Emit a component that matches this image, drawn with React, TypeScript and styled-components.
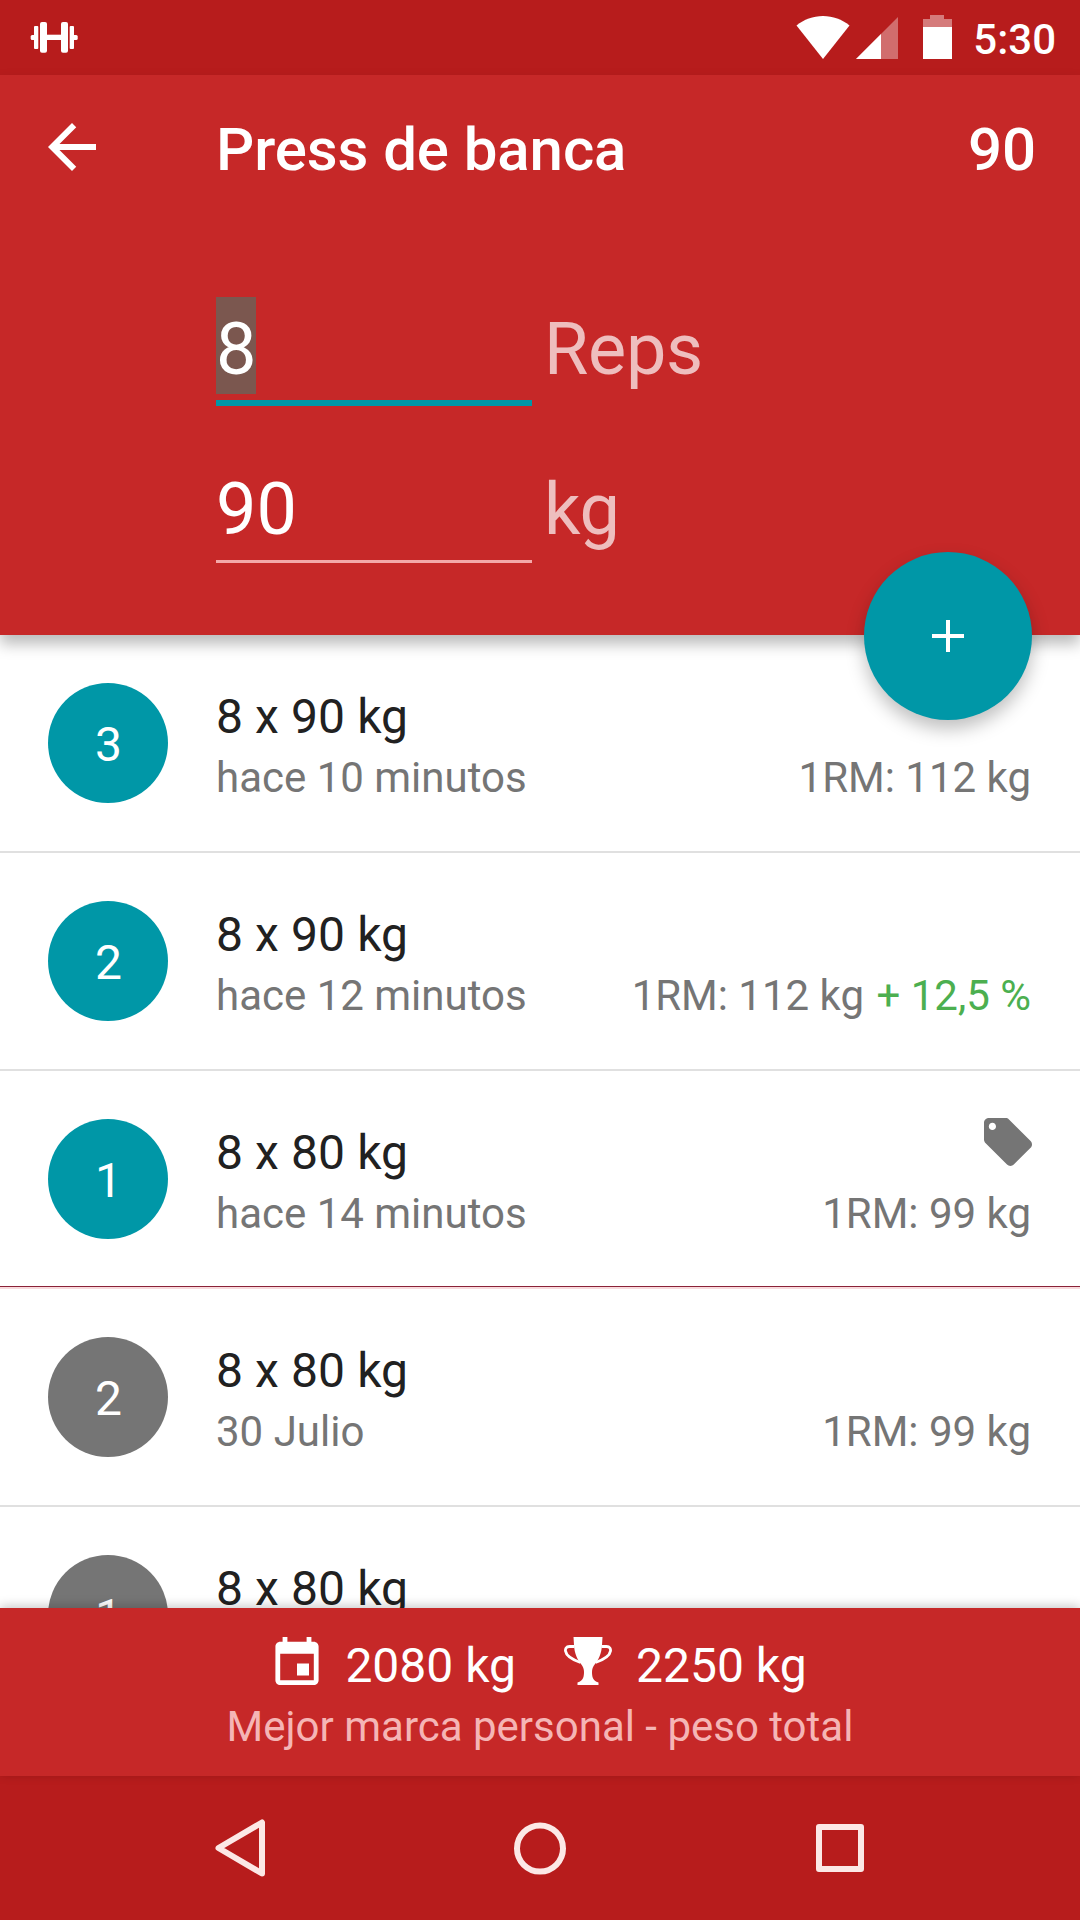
import React from "react";
import styled, { createGlobalStyle } from "styled-components";

const colors = {
  primary: "#c62828",
  primaryDark: "#b71c1c",
  accent: "#0097a7",
  text: "#212121",
  secondary: "#757575",
  divider: "#e0e0e0",
  gain: "#4caf50",
};

const GlobalStyle = createGlobalStyle`
  * { box-sizing: border-box; }
  body { margin: 0; }
`;

const Screen = styled.div`
  width: 1080px;
  height: 1920px;
  display: flex;
  flex-direction: column;
  overflow: hidden;
  background: #fff;
  font-family: Roboto, sans-serif;
  font-size: 48px;
  color: ${colors.text};
`;

const StatusBar = styled.div`
  flex: none;
  height: 75px;
  display: flex;
  justify-content: space-between;
  padding: 0 24px 0 30px;
  background: ${colors.primaryDark};
  color: #fff;
`;

const StatusIcons = styled.div`
  display: flex;
`;

const StatusIcon = styled.svg<{ $gap?: number }>`
  display: block;
  height: 75px;
  margin-right: ${(p) => p.$gap ?? 0}px;
`;

const Clock = styled.div`
  font-size: 42px;
  font-weight: 500;
  line-height: 80px;
`;

const Header = styled.header`
  flex: none;
  position: relative;
  z-index: 2;
  height: 560px;
  background: ${colors.primary};
  color: #fff;
  box-shadow: 0 9px 14px rgba(0, 0, 0, 0.27);
`;

const Toolbar = styled.div`
  height: 147px;
  display: flex;
  align-items: center;
  padding: 0 44px 0 48px;
`;

const BackArrow = styled.svg`
  display: block;
  width: 48px;
  height: 48px;
  margin: 0 120px 3px 0;
`;

const Title = styled.h1<{ $end?: boolean }>`
  margin: ${(p) => (p.$end ? "0 0 0 auto" : "0")};
  font-size: 60px;
  font-weight: 500;
  line-height: 70px;
  letter-spacing: -0.1px;
  padding-top: 3px;
`;

const Form = styled.div`
  padding: 75px 0 0 216px;
  display: flex;
  flex-direction: column;
  gap: 51px;
`;

const Field = styled.label`
  display: flex;
  gap: 12px;
  height: 109px;
  font-size: 72px;
  line-height: 97px;
`;

const Input = styled.div<{ $focused?: boolean }>`
  width: 316px;
  height: ${(p) => (p.$focused ? 109 : 106)}px;
  border-bottom: ${(p) => (p.$focused ? `6px solid ${colors.accent}` : "3px solid #f4a9a9")};
`;

const Value = styled.span<{ $selected?: boolean }>`
  display: inline-block;
  height: 97px;
  line-height: 105px;
  background: ${(p) => (p.$selected ? "#7b574f" : "transparent")};
`;

const Unit = styled.span`
  line-height: 105px;
  letter-spacing: -0.3px;
  color: #eebebe;
`;

const Fab = styled.button`
  position: absolute;
  right: 48px;
  bottom: -85px;
  width: 168px;
  height: 168px;
  padding: 0;
  border: 0;
  border-radius: 50%;
  display: grid;
  place-items: center;
  background: ${colors.accent};
  box-shadow: 0 9px 18px rgba(0, 0, 0, 0.25);
`;

const List = styled.main`
  flex: 1;
  min-height: 0;
  overflow: hidden;
`;

const Row = styled.div<{ $strong?: boolean }>`
  height: 218px;
  display: flex;
  padding: 48px 48px 0;
  border-bottom: 2px solid ${(p) => (p.$strong ? "#f8dadd" : colors.divider)};
  box-shadow: ${(p) => (p.$strong ? "inset 0 -1px 0 #8a2238" : "none")};
`;

const Badge = styled.div<{ $past?: boolean }>`
  flex: none;
  width: 120px;
  height: 120px;
  margin-right: 48px;
  padding-left: 1px;
  border-radius: 50%;
  text-align: center;
  line-height: 124px;
  background: ${(p) => (p.$past ? colors.secondary : colors.accent)};
  color: #fff;
`;

const Details = styled.div`
  flex: 1;
  display: flex;
  flex-direction: column;
`;

const Line = styled.div<{ $small?: boolean }>`
  display: flex;
  justify-content: space-between;
  height: ${(p) => (p.$small ? 56 : 64)}px;
  padding-right: ${(p) => (p.$small ? 1 : 0)}px;
  line-height: ${(p) => (p.$small ? 62 : 68)}px;
  font-size: ${(p) => (p.$small ? 42 : 48)}px;
  letter-spacing: ${(p) => (p.$small ? 0 : 0.1)}px;
  color: ${(p) => (p.$small ? colors.secondary : colors.text)};
`;

const Gain = styled.span`
  margin-left: 2px;
  color: ${colors.gain};
`;

const TagIcon = styled.svg`
  display: block;
  width: 48px;
  height: 48px;
  margin-top: -1px;
`;

const Footer = styled.footer`
  flex: none;
  position: relative;
  z-index: 2;
  height: 168px;
  padding-top: 24px;
  background: ${colors.primary};
  color: #fff;
  box-shadow: 0 -2px 10px rgba(0, 0, 0, 0.22);
`;

const Totals = styled.div`
  display: flex;
  justify-content: center;
  height: 66px;
  line-height: 68px;
`;

const TotalIcon = styled.svg`
  display: block;
  width: 48px;
  height: 48px;
  margin: 5px 24px 0 0;
`;

const Total = styled.div`
  display: flex;
  & + & {
    margin-left: 48px;
  }
`;

const Caption = styled.div`
  text-align: center;
  font-size: 42px;
  line-height: 58px;
  color: #f5b5b5;
`;

const NavBar = styled.nav`
  flex: none;
  height: 144px;
  display: flex;
  justify-content: center;
  background: ${colors.primaryDark};
`;

const NavButton = styled.svg`
  display: block;
  width: 300px;
  height: 144px;
  fill: none;
  stroke: #fce8e6;
  stroke-width: 6;
  stroke-linejoin: round;
`;

type Entry = {
  set: number;
  weight: string;
  when: string;
  max: string;
  gain?: string;
  tagged?: boolean;
  past?: boolean;
  lastOfDay?: boolean;
};

const entries: Entry[] = [
  { set: 3, weight: "8 x 90 kg", when: "hace 10 minutos", max: "1RM: 112 kg" },
  { set: 2, weight: "8 x 90 kg", when: "hace 12 minutos", max: "1RM: 112 kg", gain: "+ 12,5 %" },
  { set: 1, weight: "8 x 80 kg", when: "hace 14 minutos", max: "1RM: 99 kg", tagged: true, lastOfDay: true },
  { set: 2, weight: "8 x 80 kg", when: "30 Julio", max: "1RM: 99 kg", past: true },
  { set: 1, weight: "8 x 80 kg", when: "", max: "", past: true },
];

function EntryRow({ entry }: { entry: Entry }) {
  return (
    <Row $strong={entry.lastOfDay}>
      <Badge $past={entry.past}>{entry.set}</Badge>
      <Details>
        <Line>
          <span>{entry.weight}</span>
          {entry.tagged && (
            <TagIcon viewBox="2 2 20 20" fill={colors.secondary}>
              <path d="M21.41 11.58l-9-9C12.05 2.22 11.55 2 11 2H4c-1.1 0-2 .9-2 2v7c0 .55.22 1.05.59 1.42l9 9c.36.36.86.58 1.41.58.55 0 1.05-.22 1.41-.59l7-7c.37-.36.59-.86.59-1.41 0-.55-.23-1.06-.59-1.42zM5.5 7C4.67 7 4 6.33 4 5.5S4.67 4 5.5 4 7 4.67 7 5.5 6.33 7 5.5 7z" />
            </TagIcon>
          )}
        </Line>
        <Line $small>
          <span>{entry.when}</span>
          <span>
            {entry.max}
            {entry.gain && <Gain> {entry.gain}</Gain>}
          </span>
        </Line>
      </Details>
    </Row>
  );
}

export default function App() {
  return (
    <Screen>
      <GlobalStyle />
      <StatusBar>
        <StatusIcon width="48" viewBox="0 0 48 75" fill="#fff">
          <rect x="0.7" y="35" width="5" height="5" rx="1.5" />
          <rect x="4" y="26" width="4.3" height="23" rx="1" />
          <rect x="10" y="22" width="7" height="30.7" rx="2" />
          <rect x="16" y="34.7" width="16" height="5.3" />
          <rect x="31" y="22" width="7" height="30.7" rx="2" />
          <rect x="39.7" y="26" width="4.3" height="23" rx="1" />
          <rect x="42.7" y="35" width="5" height="5" rx="1.5" />
        </StatusIcon>
        <StatusIcons>
          <StatusIcon width="54" viewBox="0 0 54 75" fill="#fff" $gap={6}>
            <path d="M0.5 25.5C8 19.5 17 16 27 16s19 3.5 26.5 9.500L27 59z" />
          </StatusIcon>
          <StatusIcon width="43" viewBox="0 0 43 75" fill="#fff" $gap={24}>
            <path d="M42 17v42H0z" fillOpacity="0.36" />
            <path d="M25 34v25H0z" />
          </StatusIcon>
          <StatusIcon width="29" viewBox="0 0 29 75" fill="#fff" $gap={21}>
            <path d="M0 27v-8h7v-4h14v4h8v8z" fillOpacity="0.42" />
            <path d="M0 27h29v32H0z" />
          </StatusIcon>
          <Clock>5:30</Clock>
        </StatusIcons>
      </StatusBar>

      <Header>
        <Toolbar>
          <BackArrow viewBox="4 4 16 16" fill="#fff">
            <path d="M20 11H7.83l5.59-5.59L12 4l-8 8 8 8 1.41-1.41L7.83 13H20v-2z" />
          </BackArrow>
          <Title>Press de banca</Title>
          <Title as="span" $end>
            90
          </Title>
        </Toolbar>
        <Form>
          <Field>
            <Input $focused>
              <Value $selected>8</Value>
            </Input>
            <Unit>Reps</Unit>
          </Field>
          <Field>
            <Input>
              <Value>90</Value>
            </Input>
            <Unit>kg</Unit>
          </Field>
        </Form>
        <Fab aria-label="Añadir">
          <svg width="32" height="32" fill="#fff">
            <path d="M14 0h4v14h14v4H18v14h-4V18H0v-4h14z" />
          </svg>
        </Fab>
      </Header>

      <List>
        {entries.map((entry, i) => (
          <EntryRow key={i} entry={entry} />
        ))}
      </List>

      <Footer>
        <Totals>
          <Total>
            <TotalIcon viewBox="2 1 20 20" fill="#fff">
              <path d="M17 12h-5v5h5v-5zM16 1v2H8V1H6v2H5c-1.11 0-1.99.9-1.99 2L3 19c0 1.1.89 2 2 2h14c1.1 0 2-.9 2-2V5c0-1.1-.9-2-2-2h-1V1h-2zm3 18H5V8h14v11z" />
            </TotalIcon>
            2080 kg
          </Total>
          <Total>
            <TotalIcon viewBox="0 0 48 48" fill="#fff">
              <path d="M9.5 0h29L38 8c-.5 9-3.5 14.5-7 19-2.2 3-3 5-3 8 0 4 .5 9 6.5 10.500V48h-21v-2.500C19.5 44 20 39 20 35c0-3-.8-5-3-8-3.500-4.500-6.500-10-7-19z" />
              <g fill="none" stroke="#fff" strokeWidth="2.8">
                <path d="M10.5 9.500H5.500C2 9.500 1.200 12 1.500 14c.7 5 6.500 8.500 15 11.500" />
                <path d="M37.5 9.500h5c3.500 0 4.300 2.500 4 4.500-.7 5-6.500 8.500-15 11.500" />
              </g>
            </TotalIcon>
            2250 kg
          </Total>
        </Totals>
        <Caption>Mejor marca personal - peso total</Caption>
      </Footer>

      <NavBar>
        <NavButton viewBox="0 0 300 144">
          <path d="M172 46.500v51L128.500 72z" />
        </NavButton>
        <NavButton viewBox="0 0 300 144">
          <circle cx="150" cy="72.5" r="23" />
        </NavButton>
        <NavButton viewBox="0 0 300 144">
          <rect x="129" y="51" width="42" height="42" />
        </NavButton>
      </NavBar>
    </Screen>
  );
}
